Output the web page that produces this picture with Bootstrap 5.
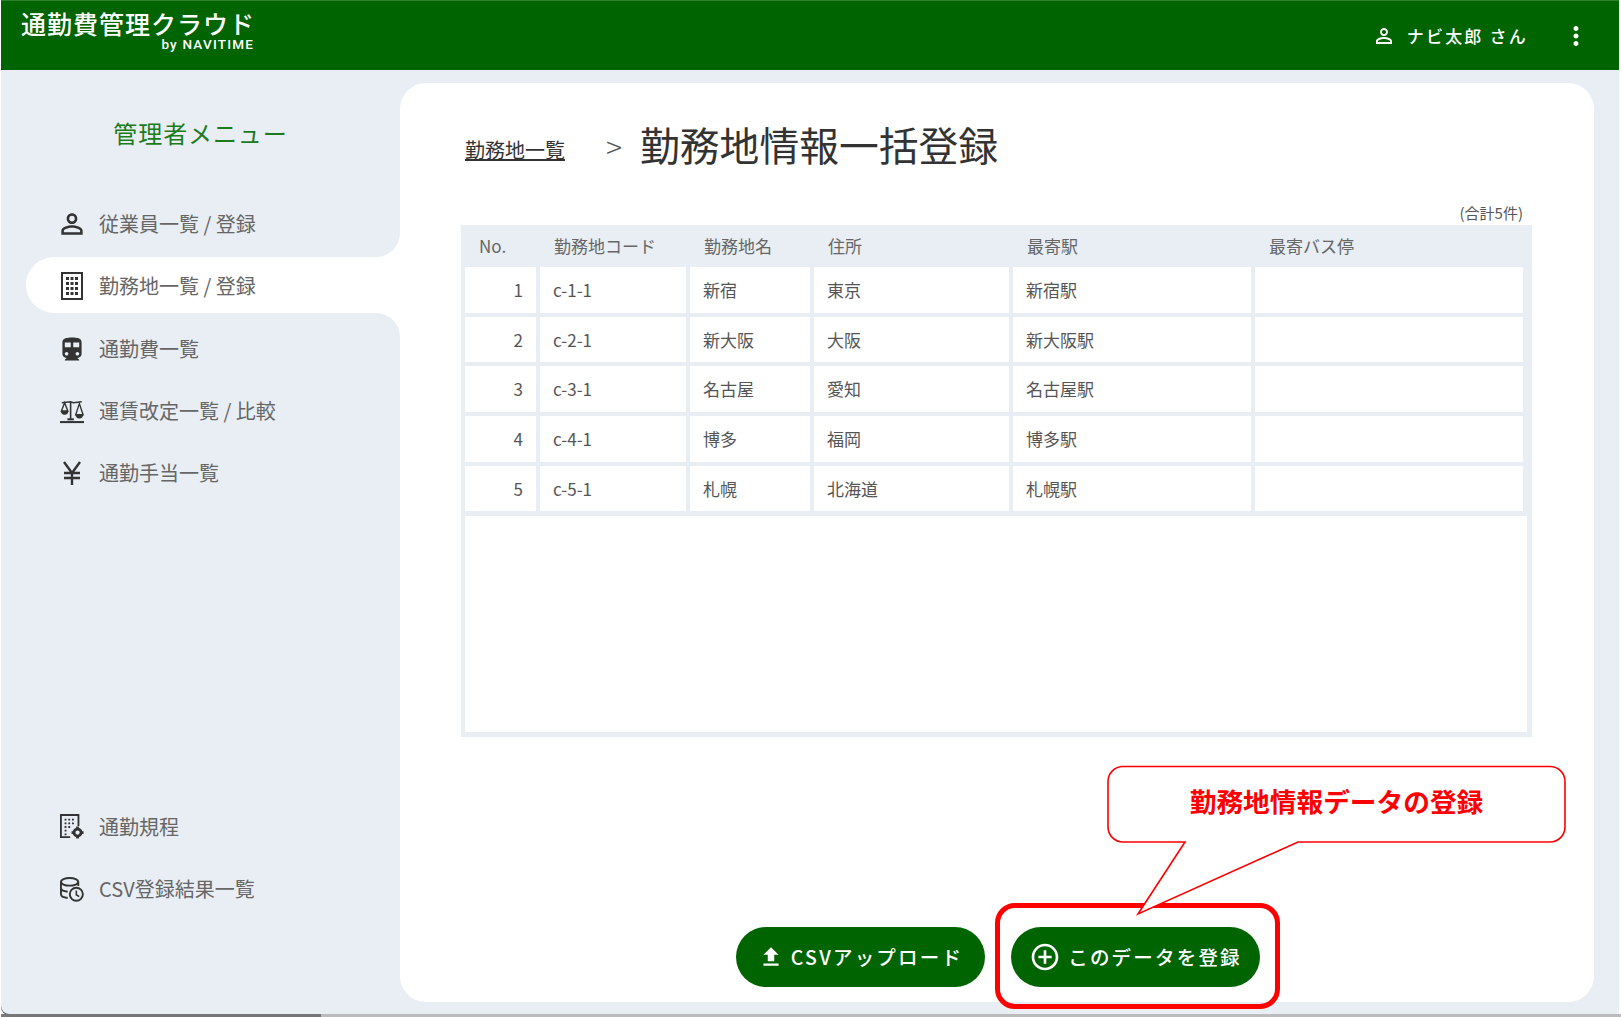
<!DOCTYPE html>
<html lang="ja">
<head>
<meta charset="UTF-8">
<title>勤務地情報一括登録</title>
<link href="https://cdn.jsdelivr.net/npm/bootstrap@5.3.0/dist/css/bootstrap.min.css" rel="stylesheet">
<style>
    html, body { height: 100%; background: #fff; overflow: hidden; }
    body { font-family: "Noto Sans CJK JP", "Noto Sans", sans-serif; color: #555; }
    .app-frame { width: 1618px; height: 1014px; margin-left: 1px; background: #e8eef4; border-bottom-left-radius: 8px; box-shadow: 0 1px 0 #333; }
    .app-header { height: 70px; background: #006400; color: #fff; border-top: 1px solid #2f7f2f; }
    .brand-box { width: 233px; margin-left: 20px; padding-top: 10px; line-height: 1; align-self: flex-start; }
    .brand-name { font-size: 25px; letter-spacing: 1px; white-space: nowrap; font-weight: 500; }
    .brand-by { font-family: Roboto, sans-serif; font-size: 13.5px; font-weight: 500; letter-spacing: 1.2px; text-align: right; margin-top: 2px; }
    .user-name { font-size: 17px; font-weight: 500; letter-spacing: 2.2px; margin: 0 33px 0 11px; }
    .menu-btn { margin-right: 28px; }
    .side-col { width: 399px; }
    .side-title { color: #1c7c1c; font-size: 24px; letter-spacing: .9px; text-align: center; height: 40px; line-height: 40px; margin: 43px 0 39px; }
    .side-wrap { background: linear-gradient(90deg, #e8eef4 300px, #fff 300px); }
    .side-item { height: 62px; padding-left: 59px; font-size: 20px; background: #e8eef4; color: #666; gap: 15px; }
    .side-item svg { width: 24px; height: 28px; flex: none; color: #333; }
    .side-prev { height: 65px; padding-bottom: 2px; border-bottom-right-radius: 24px; }
    .side-next { height: 67px; border-top-right-radius: 24px; padding-top: 5px; }
    .side-on { height: 56px; background: #fff; margin-left: 25px; padding-left: 34px; padding-top: 2px; border-radius: 28px 0 0 28px; }
    .side-foot { padding-bottom: 94px; }
    .main-panel { width: 1194px; margin: 13px 0 12px 0; background: #fff; border-radius: 26px; padding: 0 71px 0 65px; }
    .crumb-row { height: 48px; margin-top: 37px; }
    .crumb-link { color: #333; font-size: 20px; margin-top: 11px; }
    .crumb-sep { color: #555; font-size: 30px; width: 75px; padding-left: 41px; padding-top: 5px; font-weight: 300; }
    .page-title { color: #333; font-size: 39.8px; font-weight: 400; margin: 0; white-space: nowrap; }
    .total-count { font-size: 15px; text-align: right; height: 20px; line-height: 20px; margin-top: 35px; color: #555; }
    .table-box { background: #e8eef4; padding: 0 4px 5px; width: 1071px; margin-left: -4px; margin-top: 2px; height: 512px; }
    .site-table { width: 1058px; border-collapse: separate; border-spacing: 0; table-layout: fixed; font-size: 17px; margin: 0; }
    .site-table th { font-weight: 400; height: 42px; padding: 0 0 1px 14px; color: #666; }
    .site-table td { height: 49.7px; padding: 0 0 0 13px; background: #fff; background-clip: padding-box; border: solid transparent; border-width: 0 4px 4.7px 0; color: #555; }
    .site-table td:last-child, .site-table th:last-child { border-right: 0; }
    .site-table td.num-cell { text-align: right; padding-right: 13px; padding-left: 0; }
    .blank-area { background: #fff; height: 216px; width: 1062px; margin-top: 1px; }
    .action-row { gap: 26px; margin-top: auto; margin-bottom: 15px; padding-left: 8px; }
    .pill-btn { width: 249px; height: 60px; border-radius: 30px; background: #006400; color: #fff; font-size: 19.5px; font-weight: 500; letter-spacing: 2.2px; gap: 7px; border: 0; }
    .pill-btn:hover { background: #006400; color: #fff; }
    .mark-box { position: absolute; left: 995px; top: 903px; width: 285px; height: 106px; border: 5px solid #f00; border-radius: 20px; }
    .note-svg { position: absolute; left: 1100px; top: 760px; width: 480px; height: 170px; }
    .note-text { position: absolute; left: 1108px; top: 766px; width: 457px; height: 70px; line-height: 70px; text-align: center; color: #f00; font-size: 26.7px; font-weight: 700; white-space: nowrap; }
    .strip-bottom { height: 3px; margin-left: 1px; width: 1620px; background: linear-gradient(90deg, #777 0, #777 320px, #bbb 320px); }
</style>
</head>
<body>
<div class="position-relative">
<div class="app-frame d-flex flex-column">
    <header class="app-header d-flex align-items-center justify-content-between">
        <div class="brand-box">
            <div class="brand-name">通勤費管理クラウド</div>
            <div class="brand-by">by NAVITIME</div>
        </div>
        <div class="d-flex align-items-center">
            <svg width="24" height="24" viewBox="0 0 24 24" fill="#fff"><path d="M12 5.900c1.160 0 2.100.94 2.100 2.100s-.94 2.100-2.100 2.100S9.900 9.160 9.900 8s.94-2.100 2.100-2.100m0 9c2.970 0 6.100 1.460 6.100 2.100v1.100H5.900V17c0-.64 3.130-2.100 6.100-2.100M12 4C9.790 4 8 5.790 8 8s1.790 4 4 4 4-1.790 4-4-1.790-4-4-4zm0 9c-2.670 0-8 1.340-8 4v3h16v-3c0-2.660-5.330-4-8-4z"/></svg>
            <span class="user-name">ナビ太郎 さん</span>
            <svg class="menu-btn" width="30" height="30" viewBox="0 0 24 24" fill="#fff"><path d="M12 8c1.100 0 2-.9 2-2s-.9-2-2-2-2 .9-2 2 .9 2 2 2zm0 2c-1.100 0-2 .9-2 2s.9 2 2 2 2-.9 2-2-.9-2-2-2zm0 6c-1.100 0-2 .9-2 2s.9 2 2 2 2-.9 2-2-.9-2-2-2z"/></svg>
        </div>
    </header>
    <div class="d-flex flex-grow-1">
        <aside class="side-col d-flex flex-column">
            <div class="side-title">管理者メニュー</div>
            <div class="side-wrap">
                <div class="side-item side-prev d-flex align-items-center">
                    <svg viewBox="3 3 18 18" fill="currentColor"><path d="M12 5.900c1.160 0 2.100.94 2.100 2.100s-.94 2.100-2.100 2.100S9.900 9.160 9.900 8s.94-2.100 2.100-2.100m0 9c2.970 0 6.100 1.460 6.100 2.100v1.100H5.900V17c0-.64 3.130-2.100 6.100-2.100M12 4C9.790 4 8 5.790 8 8s1.790 4 4 4 4-1.790 4-4-1.790-4-4-4zm0 9c-2.670 0-8 1.340-8 4v3h16v-3c0-2.660-5.330-4-8-4z"/></svg>
                    <span>従業員一覧 / 登録</span>
                </div>
                <div class="side-item side-on d-flex align-items-center">
                    <svg viewBox="0 0 24 28" fill="currentColor"><path fill-rule="evenodd" d="M1 0h22v28H1zM3 2v24h18V2z"/><path d="M6 5h3v3H6zM10.500 5h3v3h-3zM15 5h3v3h-3zM6 10h3v3H6zM10.500 10h3v3h-3zM15 10h3v3h-3zM6 15h3v3H6zM10.500 15h3v3h-3zM15 15h3v3h-3zM6 20h3v3H6zM10.500 20h3v3h-3zM15 20h3v3h-3z"/></svg>
                    <span>勤務地一覧 / 登録</span>
                </div>
                <div class="side-item side-next d-flex align-items-center">
                    <svg viewBox="2 1 20 21" fill="currentColor"><path d="M12 2c-4 0-8 .5-8 4v9.500C4 17.430 5.570 19 7.500 19L6 20.500v.5h12v-.5L16.500 19c1.930 0 3.500-1.570 3.500-3.500V6c0-3.500-3.580-4-8-4zM7.500 17c-.83 0-1.500-.67-1.500-1.500S6.670 14 7.500 14s1.500.67 1.500 1.500S8.330 17 7.500 17zm3.500-7H6V6h5v4zm2 0V6h5v4h-5zm3.500 7c-.83 0-1.500-.67-1.500-1.500s.67-1.500 1.500-1.500 1.500.67 1.500 1.500-.67 1.500-1.500 1.500z"/></svg>
                    <span>通勤費一覧</span>
                </div>
            </div>
            <div class="side-item d-flex align-items-center">
                <svg viewBox="0 0 26 26" fill="none" stroke="currentColor" stroke-width="1.800"><path d="M0 25h26" stroke-width="2.200"/><path d="M11.500 22V3M2 4l9.500-1 3 1 9-1" stroke-width="1.700"/><path d="M5 4L1.500 13h7zM21 5l-4 12h8z" stroke-width="1.500"/><path d="M1 13a4 4 0 0 0 8 0zM17 17a4 4 0 0 0 8 0z" fill="currentColor" stroke="none"/><path d="M8 22h7" stroke-width="2.200"/></svg>
                <span>運賃改定一覧 / 比較</span>
            </div>
            <div class="side-item d-flex align-items-center">
                <svg viewBox="0 0 24 28" fill="none" stroke="currentColor" stroke-width="2.400"><path d="M4 3l8 11 8-11M12 14v12M4 14h16M4 19h16"/></svg>
                <span>通勤手当一覧</span>
            </div>
            <div class="mt-auto side-foot">
                <div class="side-item d-flex align-items-center">
                    <svg viewBox="1 1 26 28" fill="currentColor"><path fill-rule="evenodd" d="M1 1h21v13h-2V3H3v22h9v2H1z"/><path d="M6 6h2v2H6zM10 6h2v2h-2zM14 6h2v2h-2zM6 10h2v2H6zM10 10h2v2h-2zM14 10h2v2h-2zM6 14h2v2H6zM10 14h2v2h-2zM6 18h2v2H6zM6 22h2v2H6z"/><circle cx="20" cy="21" r="3.800" fill="none" stroke="currentColor" stroke-width="3"/><path d="M18.500 14.500h3v3h-3zM18.500 24.500h3v3h-3zM13.500 19.500h3v3h-3zM23.500 19.500h3v3h-3z"/></svg>
                    <span>通勤規程</span>
                </div>
                <div class="side-item d-flex align-items-center">
                    <svg viewBox="1 1 25 26" fill="none" stroke="currentColor" stroke-width="2"><ellipse cx="11" cy="6.500" rx="9" ry="4"/><path d="M2 6.500v13c0 2 3 3.500 7 3.800M20 6.500V11M2 13c0 2 3 3.500 7 3.800"/><circle cx="18" cy="19.500" r="6.800" fill="#e8eef4"/><path d="M18 15.500v4.500l3 2" stroke-width="1.600"/></svg>
                    <span>CSV登録結果一覧</span>
                </div>
            </div>
        </aside>
        <main class="main-panel d-flex flex-column">
            <div class="crumb-row d-flex align-items-center">
                <a class="crumb-link" href="#">勤務地一覧</a>
                <span class="crumb-sep">&gt;</span>
                <h1 class="page-title">勤務地情報一括登録</h1>
            </div>
            <div class="total-count">(合計5件)</div>
            <div class="table-box">
                <table class="site-table">
                    <colgroup><col style="width:75px"><col style="width:150px"><col style="width:124px"><col style="width:199px"><col style="width:242px"><col></colgroup>
                    <thead>
                        <tr><th>No.</th><th>勤務地コード</th><th>勤務地名</th><th>住所</th><th>最寄駅</th><th>最寄バス停</th></tr>
                    </thead>
                    <tbody>
                        <tr><td class="num-cell">1</td><td>c-1-1</td><td>新宿</td><td>東京</td><td>新宿駅</td><td></td></tr>
                        <tr><td class="num-cell">2</td><td>c-2-1</td><td>新大阪</td><td>大阪</td><td>新大阪駅</td><td></td></tr>
                        <tr><td class="num-cell">3</td><td>c-3-1</td><td>名古屋</td><td>愛知</td><td>名古屋駅</td><td></td></tr>
                        <tr><td class="num-cell">4</td><td>c-4-1</td><td>博多</td><td>福岡</td><td>博多駅</td><td></td></tr>
                        <tr><td class="num-cell">5</td><td>c-5-1</td><td>札幌</td><td>北海道</td><td>札幌駅</td><td></td></tr>
                    </tbody>
                </table>
                <div class="blank-area"></div>
            </div>
            <div class="action-row d-flex justify-content-center">
                <button type="button" class="btn pill-btn d-flex align-items-center justify-content-center">
                    <svg width="26" height="26" viewBox="0 0 24 24" fill="#fff"><path d="M9 16h6v-6h4l-7-7-7 7h4zm-4 2h14v2H5z"/></svg>
                    <span>CSVアップロード</span>
                </button>
                <button type="button" class="btn pill-btn d-flex align-items-center justify-content-center">
                    <svg width="32" height="32" viewBox="0 0 24 24" fill="#fff"><path d="M13 7h-2v4H7v2h4v4h2v-4h4v-2h-4V7zm-1-5C6.480 2 2 6.480 2 12s4.480 10 10 10 10-4.480 10-10S17.520 2 12 2zm0 18c-4.410 0-8-3.590-8-8s3.590-8 8-8 8 3.590 8 8-3.590 8-8 8z"/></svg>
                    <span>このデータを登録</span>
                </button>
            </div>
        </main>
    </div>
</div>
<div class="strip-bottom"></div>
<div class="mark-box"></div>
<svg class="note-svg" viewBox="0 0 480 170">
    <path d="M23 6.500H450a15 15 0 0 1 15 15V67a15 15 0 0 1-15 15H198L38 154 85 82H23A15 15 0 0 1 8 67V21.500A15 15 0 0 1 23 6.500z" fill="#fff" stroke="#f00" stroke-width="1.600"/>
</svg>
<div class="note-text">勤務地情報データの登録</div>
</div>
</body>
</html>
